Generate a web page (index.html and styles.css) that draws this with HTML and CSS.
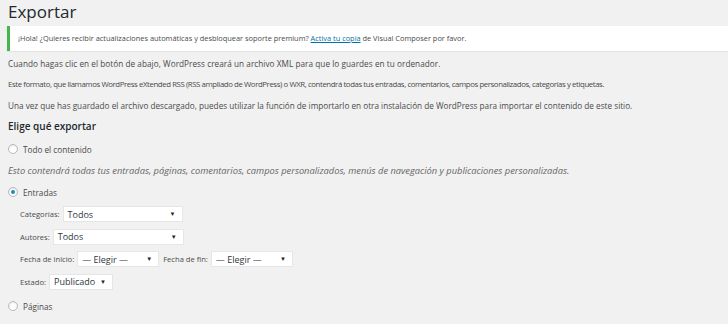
FILE: index.html
```html
<!DOCTYPE html>
<html lang="es">
<head>
    <meta charset="UTF-8">
    <title>Exportar</title>
    <link rel="stylesheet" href="styles.css">
</head>
<body>

<div class="wrap">
    <h1 class="page-title">Exportar</h1>

    <div class="notice">
        ¡Hola! ¿Quieres recibir actualizaciones automáticas y desbloquear soporte premium? <a href="#">Activa tu copia</a> de Visual Composer por favor.
    </div>

    <p class="text wide">Cuando hagas clic en el botón de abajo, WordPress creará un archivo XML para que lo guardes en tu ordenador.</p>
    <p class="text tight">Este formato, que llamamos WordPress eXtended RSS (RSS ampliado de WordPress) o WXR, contendrá todas tus entradas, comentarios, campos personalizados, categorías y etiquetas.</p>
    <p class="text">Una vez que has guardado el archivo descargado, puedes utilizar la función de importarlo en otra instalación de WordPress para importar el contenido de este sitio.</p>

    <h2 class="section-title">Elige qué exportar</h2>

    <div class="choice first"><span class="radio"></span>Todo el contenido</div>
    <p class="desc">Esto contendrá todas tus entradas, páginas, comentarios, campos personalizados, menús de navegación y publicaciones personalizadas.</p>

    <div class="choice"><span class="radio checked"></span>Entradas</div>

    <ul class="filters">
        <li class="filter">
            <span class="label">Categorías:</span>
            <span class="select w-cat"><span class="value">Todos</span><span class="arrow">▼</span></span>
        </li>
        <li class="filter">
            <span class="label">Autores:</span>
            <span class="select w-aut"><span class="value">Todos</span><span class="arrow">▼</span></span>
        </li>
        <li class="filter">
            <span class="label">Fecha de inicio:</span>
            <span class="select w-date"><span class="value">— Elegir —</span><span class="arrow">▼</span></span>
            <span class="label">Fecha de fin:</span>
            <span class="select w-date"><span class="value">— Elegir —</span><span class="arrow">▼</span></span>
        </li>
        <li class="filter">
            <span class="label">Estado:</span>
            <span class="select w-status"><span class="value">Publicado</span><span class="arrow">▼</span></span>
        </li>
    </ul>

    <div class="choice last"><span class="radio"></span>Páginas</div>
</div>

</body>
</html>
```

FILE: styles.css
```css
body {
    margin: 0;
    background: #f1f1f1;
    color: #4a4a4a;
    font-family: "Open Sans", "Liberation Sans", Arial, sans-serif;
    font-size: 8.2px;
    overflow: hidden;
}
.wrap {
    padding: 0 0 0 8px;
}
.page-title {
    margin: 0;
    padding-top: 1px;
    height: 25px;
    font-size: 17px;
    font-weight: 400;
    line-height: 22px;
    color: #23282d;
}
.notice {
    margin-left: -1px;
    height: 25px;
    line-height: 25px;
    padding-left: 8px;
    background: #fff;
    border-left: 3px solid #46b450;
    box-shadow: 0 1px 1px rgba(0, 0, 0, 0.05);
    font-size: 7.4px;
    white-space: nowrap;
}
.notice a {
    color: #0073aa;
    text-decoration: underline;
}
.text {
    margin: 0;
    line-height: 21px;
    white-space: nowrap;
}
.text.wide {
    letter-spacing: 0.05px;
}
.text.tight {
    font-size: 7.8px;
    letter-spacing: -0.4px;
}
.notice + .text {
    margin-top: 2px;
}
.section-title {
    margin: 0;
    font-size: 10px;
    font-weight: 600;
    line-height: 21px;
    color: #23282d;
}
.choice {
    display: flex;
    align-items: center;
    height: 22px;
}
.choice.first {
    margin-top: 1px;
}
.choice.last {
    margin-top: 2px;
}
.radio {
    width: 8px;
    height: 8px;
    border: 1px solid #b4b9be;
    border-radius: 50%;
    background: #fff;
    margin-right: 5px;
    box-shadow: inset 0 1px 2px rgba(0, 0, 0, 0.1);
    display: flex;
    align-items: center;
    justify-content: center;
}
.radio.checked::after {
    content: "";
    width: 4px;
    height: 4px;
    border-radius: 50%;
    background: #1e8cbe;
}
.desc {
    margin: 0;
    font-style: italic;
    font-size: 9.3px;
    line-height: 21px;
    color: #666;
    white-space: nowrap;
}
.filters {
    list-style: none;
    margin: 0;
    padding: 0 0 0 12px;
}
.filter {
    display: flex;
    align-items: center;
    height: 22.5px;
    font-size: 7.6px;
}
.label {
    margin-right: 3px;
}
.select {
    display: flex;
    align-items: center;
    justify-content: space-between;
    height: 16px;
    padding: 0 6px 0 4px;
    box-sizing: border-box;
    background: #fff;
    border: 1px solid #e6e6e6;
    margin-right: 4px;
    font-size: 9px;
    color: #32373c;
}
.arrow {
    font-size: 6px;
    color: #222;
}
.w-cat { width: 120px; }
.w-aut { width: 131px; }
.w-date { width: 82px; }
.w-status { width: 64px; }
```
